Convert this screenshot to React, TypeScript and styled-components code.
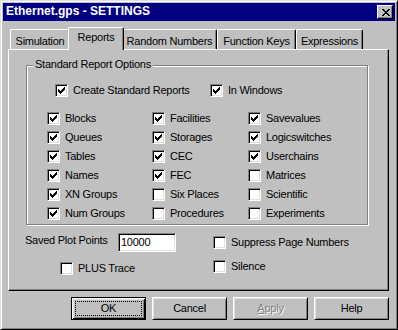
import React from 'react';
import styled, { createGlobalStyle, css } from 'styled-components';

const Global = createGlobalStyle`
  html, body { margin: 0; padding: 0; background: #c0c0c0; }
  body { font-family: "Liberation Sans", Arial, sans-serif; font-size: 11px; }
`;

const Window = styled.div`
  box-sizing: border-box;
  width: 398px;
  height: 330px;
  background: #c0c0c0;
  border: 1px solid;
  border-color: #dfdfdf #000 #000 #dfdfdf;
  box-shadow: inset 1px 1px #fff, inset -1px -1px #808080;
  padding: 2px;
  display: flex;
  flex-direction: column;
  font-family: "Liberation Sans", Arial, sans-serif;
  font-size: 11px;
  letter-spacing: -0.25px;
  color: #000;
`;

const TitleBar = styled.div`
  box-sizing: border-box;
  height: 18px;
  flex: none;
  background: #000080;
  display: flex;
  align-items: center;
  justify-content: space-between;
  padding: 0 2px 2px 3px;
`;

const TitleText = styled.span`
  color: #fff;
  font-weight: bold;
  font-size: 12px;
  letter-spacing: 0;
  line-height: 16px;
`;

const CloseButton = styled.div`
  box-sizing: border-box;
  width: 16px;
  height: 14px;
  margin-top: 2px;
  background: #c0c0c0;
  border: 1px solid;
  border-color: #fff #000 #000 #fff;
  box-shadow: inset -1px -1px #808080;
  display: flex;
  align-items: center;
  justify-content: center;
  padding-left: 1px;
`;

const Body = styled.div`
  flex: 1;
  display: flex;
  flex-direction: column;
  padding: 6px 6px 0 5px;
`;

const TabStrip = styled.div`
  display: flex;
  align-items: flex-start;
  height: 22px;
  padding-left: 2px;
`;

const Tab = styled.div<{ $active?: boolean; $w: number }>`
  box-sizing: border-box;
  flex: none;
  width: ${p => (p.$active ? p.$w + 4 : p.$w)}px;
  height: ${p => (p.$active ? 23 : 20)}px;
  margin: ${p => (p.$active ? '0 -2px' : '2px 0 0')};
  padding-top: ${p => (p.$active ? 3 : 5)}px;
  position: relative;
  z-index: ${p => (p.$active ? 1 : 0)};
  background: #c0c0c0;
  border-top: 1px solid #fff;
  border-left: 1px solid #fff;
  border-right: 1px solid #000;
  border-radius: 2px 2px 0 0;
  box-shadow: inset -1px 0 #808080;
  text-align: center;
  line-height: 13px;
  white-space: nowrap;
`;

const Panel = styled.div`
  box-sizing: border-box;
  height: 242px;
  flex: none;
  border-top: 1px solid #fff;
  border-left: 1px solid #fff;
  border-right: 1px solid #000;
  border-bottom: 1px solid #000;
  box-shadow: inset -1px -1px #808080;
  padding: 15px 0 0 16px;
`;

const GroupBox = styled.div`
  position: relative;
  box-sizing: border-box;
  width: 342px;
  height: 160px;
  margin-left: 1px;
  border: 1px solid #808080;
  box-shadow: inset 1px 1px #fff, 1px 1px #fff;
  padding: 18px 0 0 20px;
`;

const GroupLegend = styled.span`
  position: absolute;
  top: -8px;
  left: 6px;
  padding: 0 2px;
  background: #c0c0c0;
  line-height: 13px;
`;

const TopRow = styled.div`
  display: grid;
  grid-template-columns: 155px auto;
  padding-left: 8px;
`;

const ReportGrid = styled.div`
  display: grid;
  grid-template-columns: 105px 96px auto;
  grid-auto-rows: 13px;
  row-gap: 6px;
  margin-top: 15px;
`;

const CheckRow = styled.label<{ $indent?: number; $top?: number }>`
  display: flex;
  align-items: center;
  gap: 5px;
  height: 13px;
  line-height: 13px;
  white-space: nowrap;
  margin-left: ${p => p.$indent ?? 0}px;
  margin-top: ${p => p.$top ?? 0}px;
`;

const Box = styled.span`
  box-sizing: border-box;
  flex: none;
  width: 13px;
  height: 13px;
  background: #fff;
  border: 1px solid;
  border-color: #808080 #fff #fff #808080;
  box-shadow: inset 1px 1px #000, inset -1px -1px #dfdfdf;
  display: flex;
  align-items: center;
  justify-content: center;
`;

const Options = styled.div`
  display: grid;
  grid-template-columns: 188px auto;
  margin-top: 8px;
`;

const OptionColumn = styled.div`
  display: flex;
  flex-direction: column;
  align-items: flex-start;
`;

const FieldRow = styled.div`
  display: flex;
  align-items: flex-start;
  height: 19px;
`;

const FieldLabel = styled.span`
  width: 93px;
  padding-top: 1px;
  line-height: 13px;
  white-space: nowrap;
`;

const TextInput = styled.div`
  box-sizing: border-box;
  width: 58px;
  height: 19px;
  background: #fff;
  border: 1px solid;
  border-color: #808080 #fff #fff #808080;
  box-shadow: inset 1px 1px #000, inset -1px -1px #dfdfdf;
  padding-left: 2px;
  line-height: 17px;
`;

const ButtonRow = styled.div`
  display: flex;
  justify-content: flex-end;
  gap: 6px;
  margin-top: 6px;
`;

const Button = styled.div<{ $default?: boolean; $disabled?: boolean }>`
  box-sizing: border-box;
  width: 75px;
  height: 23px;
  background: #c0c0c0;
  display: flex;
  padding: 3px;
  border: 1px solid;
  border-color: #fff #000 #000 #fff;
  box-shadow: inset 1px 1px #dfdfdf, inset -1px -1px #808080;
  color: ${p => (p.$disabled ? '#808080' : '#000')};
  text-shadow: ${p => (p.$disabled ? '1px 1px 0 #fff' : 'none')};
  ${p =>
    p.$default &&
    css`
      border-color: #000;
      box-shadow: inset 1px 1px #fff, inset -1px -1px #000, inset 2px 2px #dfdfdf, inset -2px -2px #808080;
    `}
`;

const FocusFrame = styled.span<{ $focused?: boolean }>`
  flex: 1;
  display: flex;
  align-items: center;
  justify-content: center;
  border: 1px dotted ${p => (p.$focused ? '#000' : 'transparent')};
  line-height: 13px;
`;

const Mnemonic = styled.span`
  text-decoration: underline;
`;

const Check = () => (
  <svg width="7" height="7" viewBox="0 0 7 7" shapeRendering="crispEdges">
    <path
      fill="#000"
      d="M6 0h1v1h-1z M5 1h2v1h-2z M0 2h1v1h-1z M4 2h3v1h-3z M0 3h2v1h-2z M3 3h3v1h-3z M0 4h5v1h-5z M1 5h3v1h-3z M2 6h1v1h-1z"
    />
  </svg>
);

const CloseGlyph = () => (
  <svg width="8" height="7" viewBox="0 0 8 7" shapeRendering="crispEdges">
    <path
      fill="#000"
      d="M0 0h2v1h-2z M6 0h2v1h-2z M1 1h2v1h-2z M5 1h2v1h-2z M2 2h4v1h-4z M3 3h2v1h-2z M2 4h4v1h-4z M1 5h2v1h-2z M5 5h2v1h-2z M0 6h2v1h-2z M6 6h2v1h-2z"
    />
  </svg>
);

const CheckItem = ({
  label,
  checked,
  indent,
  top,
}: {
  label: string;
  checked?: boolean;
  indent?: number;
  top?: number;
}) => (
  <CheckRow $indent={indent} $top={top}>
    <Box>{checked && <Check />}</Box>
    <span>{label}</span>
  </CheckRow>
);

const tabs = [
  { label: 'Simulation', w: 60 },
  { label: 'Reports', w: 52, active: true },
  { label: 'Random Numbers', w: 95 },
  { label: 'Function Keys', w: 79 },
  { label: 'Expressions', w: 67 },
];

const reportItems: [string, boolean][] = [
  ['Blocks', true],
  ['Facilities', true],
  ['Savevalues', true],
  ['Queues', true],
  ['Storages', true],
  ['Logicswitches', true],
  ['Tables', true],
  ['CEC', true],
  ['Userchains', true],
  ['Names', true],
  ['FEC', true],
  ['Matrices', false],
  ['XN Groups', true],
  ['Six Places', false],
  ['Scientific', false],
  ['Num Groups', true],
  ['Procedures', false],
  ['Experiments', false],
];

export default function App() {
  return (
    <>
      <Global />
      <Window>
        <TitleBar>
          <TitleText>Ethernet.gps - SETTINGS</TitleText>
          <CloseButton>
            <CloseGlyph />
          </CloseButton>
        </TitleBar>
        <Body>
          <TabStrip>
            {tabs.map(t => (
              <Tab key={t.label} $w={t.w} $active={t.active}>
                {t.label}
              </Tab>
            ))}
          </TabStrip>
          <Panel>
            <GroupBox>
              <GroupLegend>Standard Report Options</GroupLegend>
              <TopRow>
                <CheckItem label="Create Standard Reports" checked />
                <CheckItem label="In Windows" checked />
              </TopRow>
              <ReportGrid>
                {reportItems.map(([label, checked]) => (
                  <CheckItem key={label} label={label} checked={checked} />
                ))}
              </ReportGrid>
            </GroupBox>
            <Options>
              <OptionColumn>
                <FieldRow>
                  <FieldLabel>Saved Plot Points</FieldLabel>
                  <TextInput>10000</TextInput>
                </FieldRow>
                <CheckItem label="PLUS Trace" indent={35} top={10} />
              </OptionColumn>
              <OptionColumn>
                <CheckItem label="Suppress Page Numbers" top={3} />
                <CheckItem label="Silence" top={11} />
              </OptionColumn>
            </Options>
          </Panel>
          <ButtonRow>
            <Button $default>
              <FocusFrame $focused>OK</FocusFrame>
            </Button>
            <Button>
              <FocusFrame>Cancel</FocusFrame>
            </Button>
            <Button $disabled>
              <FocusFrame>
                <Mnemonic>A</Mnemonic>pply
              </FocusFrame>
            </Button>
            <Button>
              <FocusFrame>Help</FocusFrame>
            </Button>
          </ButtonRow>
        </Body>
      </Window>
    </>
  );
}
